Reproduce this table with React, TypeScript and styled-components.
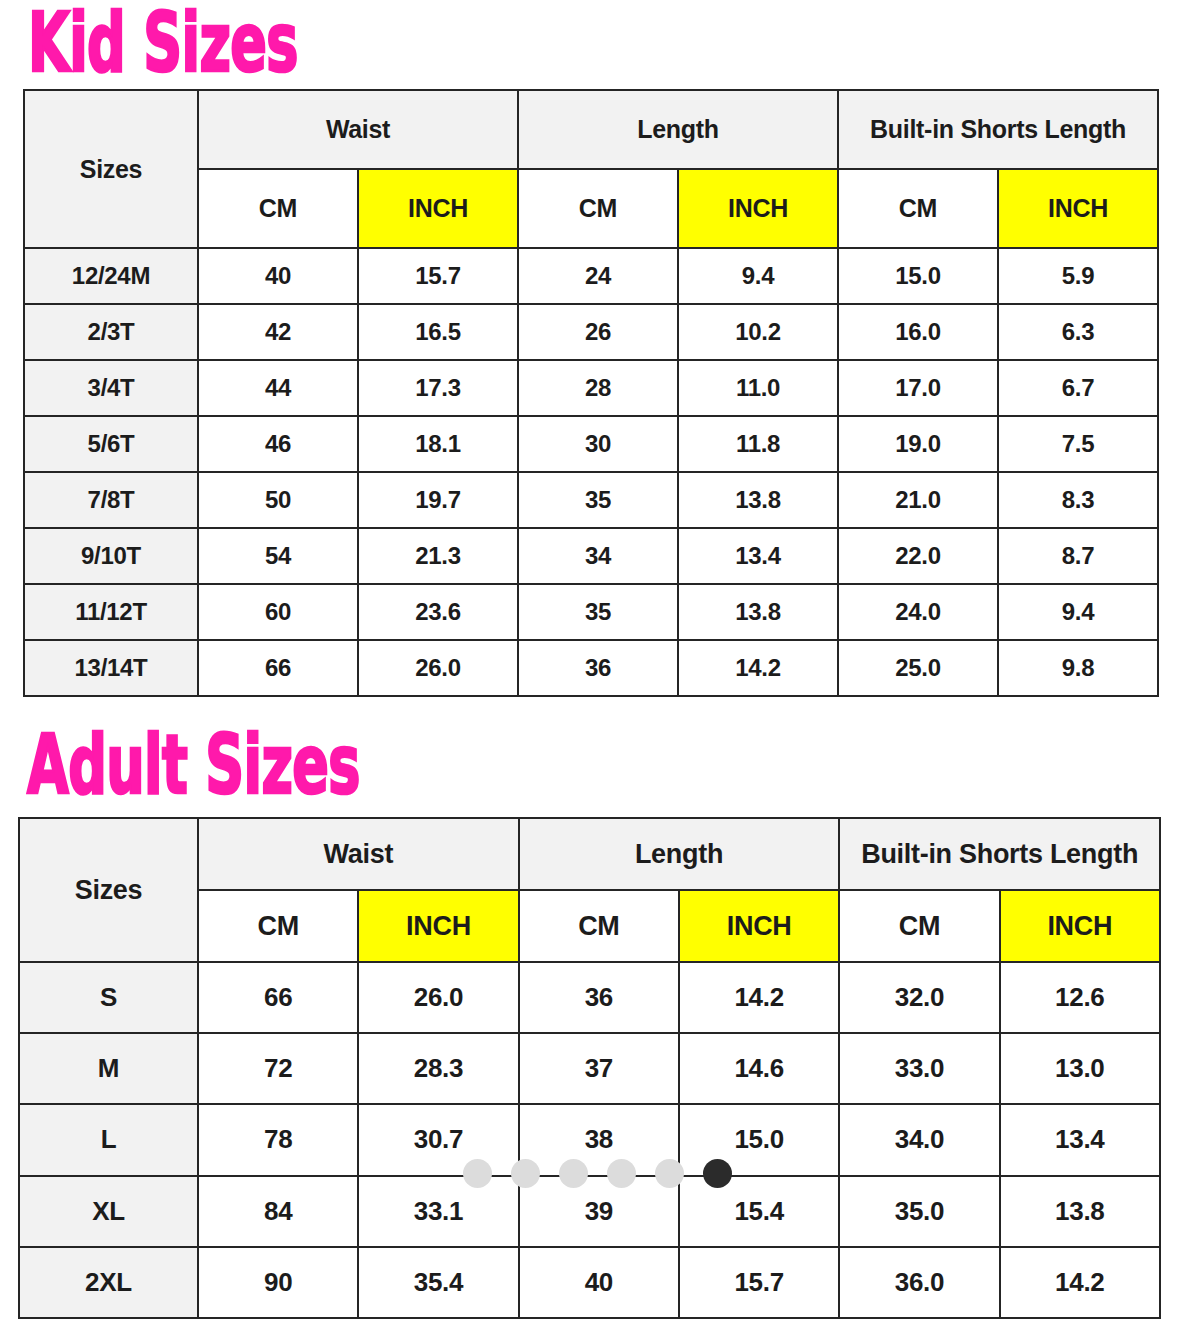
import React from 'react';
import styled, { createGlobalStyle } from 'styled-components';

const GlobalStyle = createGlobalStyle`
    html, body {
        margin: 0;
        padding: 0;
        background: #ffffff;
    }
    body {
        font-family: "Liberation Sans", Arial, sans-serif;
        color: #1c1c1c;
    }
`;

const Page = styled.div`
    position: relative;
    width: 1179px;
    height: 1328px;
    overflow: hidden;
    background: #ffffff;
`;

const TitleBar = styled.div<{ $height: number; $bottom: number; $left: number }>`
    display: flex;
    align-items: flex-end;
    height: ${p => p.$height}px;
    padding-bottom: ${p => p.$bottom}px;
    padding-left: ${p => p.$left}px;
    box-sizing: border-box;
`;

const Title = styled.h1`
    display: inline-block;
    margin: 0;
    font-family: "DejaVu Sans Condensed", "DejaVu Sans", sans-serif;
    font-weight: 700;
    font-size: 60px;
    line-height: 1;
    letter-spacing: -0.6px;
    color: #ff19ab;
    -webkit-text-stroke: 2px #ff19ab;
    transform: scaleY(1.36);
    transform-origin: left bottom;
    white-space: nowrap;
`;

const Grid = styled.div<{
    $left: number;
    $width: number;
    $height: number;
    $first: number;
    $head: number;
    $rows: number;
}>`
    display: grid;
    margin-left: ${p => p.$left}px;
    width: ${p => p.$width}px;
    height: ${p => p.$height}px;
    box-sizing: border-box;
    padding: 2px;
    gap: 2px;
    background: #252525;
    grid-template-columns: ${p => p.$first}px repeat(6, 1fr);
    grid-template-rows: ${p => p.$head}px ${p => p.$head}px repeat(${p => p.$rows}, 1fr);
`;

const tones = {
    grey: '#f2f2f2',
    white: '#ffffff',
    yellow: '#ffff00',
};

const Cell = styled.div<{ $tone: keyof typeof tones; $size: number; $rowSpan?: number; $colSpan?: number }>`
    display: flex;
    align-items: center;
    justify-content: center;
    background: ${p => tones[p.$tone]};
    font-weight: 700;
    font-size: ${p => p.$size}px;
    letter-spacing: -0.3px;
    white-space: nowrap;
    ${p => p.$rowSpan ? `grid-row: span ${p.$rowSpan};` : ''}
    ${p => p.$colSpan ? `grid-column: span ${p.$colSpan};` : ''}
`;

const Dots = styled.div`
    position: absolute;
    left: 463px;
    top: 1159px;
    display: flex;
    gap: 19px;
`;

const Dot = styled.span<{ $active?: boolean }>`
    width: 29px;
    height: 29px;
    border-radius: 50%;
    background: ${p => p.$active ? '#2b2b2b' : '#dcdcdc'};
`;

type TableProps = {
    left: number;
    width: number;
    height: number;
    first: number;
    head: number;
    headSize: number;
    size: number;
    rows: string[][];
};

const groups = ['Waist', 'Length', 'Built-in Shorts Length'];

const SizeTable = ({ left, width, height, first, head, headSize, size, rows }: TableProps) => (
    <Grid $left={left} $width={width} $height={height} $first={first} $head={head} $rows={rows.length}>
        <Cell $tone="grey" $size={headSize} $rowSpan={2}>Sizes</Cell>
        {groups.map(g => (
            <Cell key={g} $tone="grey" $size={headSize} $colSpan={2}>{g}</Cell>
        ))}
        {groups.map(g => (
            <React.Fragment key={g + '-unit'}>
                <Cell $tone="white" $size={headSize}>CM</Cell>
                <Cell $tone="yellow" $size={headSize}>INCH</Cell>
            </React.Fragment>
        ))}
        {rows.map(row => row.map((v, i) => (
            <Cell key={row[0] + i} $tone={i === 0 ? 'grey' : 'white'} $size={size}>{v}</Cell>
        )))}
    </Grid>
);

const kidRows = [
    ['12/24M', '40', '15.7', '24', '9.4', '15.0', '5.9'],
    ['2/3T', '42', '16.5', '26', '10.2', '16.0', '6.3'],
    ['3/4T', '44', '17.3', '28', '11.0', '17.0', '6.7'],
    ['5/6T', '46', '18.1', '30', '11.8', '19.0', '7.5'],
    ['7/8T', '50', '19.7', '35', '13.8', '21.0', '8.3'],
    ['9/10T', '54', '21.3', '34', '13.4', '22.0', '8.7'],
    ['11/12T', '60', '23.6', '35', '13.8', '24.0', '9.4'],
    ['13/14T', '66', '26.0', '36', '14.2', '25.0', '9.8'],
];

const adultRows = [
    ['S', '66', '26.0', '36', '14.2', '32.0', '12.6'],
    ['M', '72', '28.3', '37', '14.6', '33.0', '13.0'],
    ['L', '78', '30.7', '38', '15.0', '34.0', '13.4'],
    ['XL', '84', '33.1', '39', '15.4', '35.0', '13.8'],
    ['2XL', '90', '35.4', '40', '15.7', '36.0', '14.2'],
];

export default function App() {
    return (
        <Page>
            <GlobalStyle />
            <TitleBar $height={89} $bottom={6} $left={28}>
                <Title>Kid Sizes</Title>
            </TitleBar>
            <SizeTable
                left={23}
                width={1136}
                height={608}
                first={172}
                head={77}
                headSize={25}
                size={24}
                rows={kidRows}
            />
            <TitleBar $height={120} $bottom={12} $left={27}>
                <Title>Adult Sizes</Title>
            </TitleBar>
            <SizeTable
                left={18}
                width={1143}
                height={502}
                first={177}
                head={70}
                headSize={27}
                size={26}
                rows={adultRows}
            />
            <Dots>
                {[0, 1, 2, 3, 4, 5].map(i => (
                    <Dot key={i} $active={i === 5} />
                ))}
            </Dots>
        </Page>
    );
}
